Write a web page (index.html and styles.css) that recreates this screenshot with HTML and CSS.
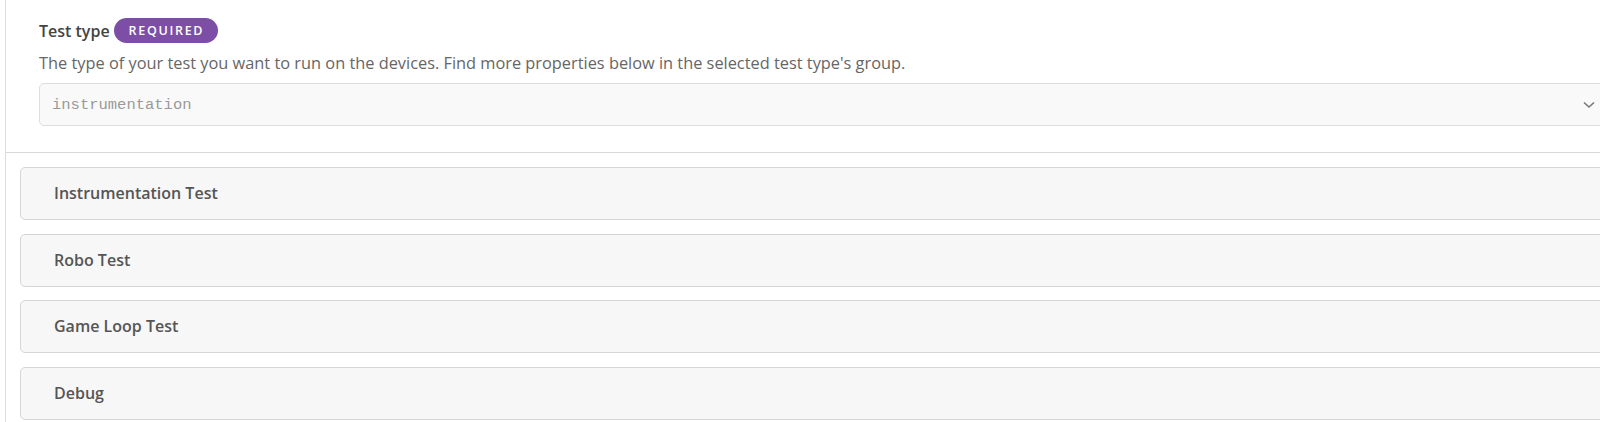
FILE: index.html
```html
<!DOCTYPE html>
<html lang="en">
<head>
    <meta charset="UTF-8">
    <meta name="viewport" content="width=device-width, initial-scale=1.0">
    <title>Test type</title>
    <link rel="stylesheet" href="styles.css">
</head>
<body>

    <div class="panel">
        <div class="field">
            <div class="label">
                <span>Test type</span>
                <span class="badge">Required</span>
            </div>
            <p class="help">The type of your test you want to run on the devices. Find more properties below in the selected test type's group.</p>
            <div class="select">
                <span>instrumentation</span>
                <svg class="chevron" width="12" height="8" viewBox="0 0 12 8">
                    <path d="M1 1.5 L6 6 L11 1.5" fill="none" stroke="#777" stroke-width="1.6"/>
                </svg>
            </div>
        </div>

        <div class="groups">
            <div class="group">Instrumentation Test</div>
            <div class="group">Robo Test</div>
            <div class="group">Game Loop Test</div>
            <div class="group">Debug</div>
        </div>
    </div>

</body>
</html>
```

FILE: styles.css
```css
body {
    margin: 0;
    font-family: "Open Sans", "Noto Sans", sans-serif;
    background: white;
    overflow: hidden;
}
.panel {
    margin-left: 5px;
    width: 1640px;
    border-left: 1px solid #dcdcdc;
    height: 422px;
}
.field {
    padding: 18px 0 26px 33px;
    border-bottom: 1px solid #d8d8d8;
}
.label {
    display: flex;
    align-items: center;
    gap: 4px;
    font-size: 16px;
    font-weight: 600;
    color: #444;
    height: 25px;
}
.badge {
    background: #7c4ea6;
    color: white;
    font-size: 12.5px;
    font-weight: 600;
    letter-spacing: 1.7px;
    text-transform: uppercase;
    padding: 0 14px 0 15px;
    height: 25px;
    line-height: 25px;
    border-radius: 13px;
}
.help {
    margin: 10px 0 10px;
    font-size: 16.35px;
    color: #666;
    line-height: 20px;
}
.select {
    display: flex;
    align-items: center;
    justify-content: space-between;
    height: 41px;
    padding: 0 14px 0 12px;
    width: 1543px;
    background: #f9f9f9;
    border: 1px solid #dedede;
    border-radius: 5px;
    font-family: "Liberation Mono", monospace;
    font-size: 15.5px;
    color: #999;
}
.groups {
    display: flex;
    flex-direction: column;
    gap: 13.7px;
    padding: 14px 0 0 14px;
}
.group {
    height: 51px;
    line-height: 51px;
    padding-left: 33px;
    background: #f7f7f7;
    border: 1px solid #d6d6d6;
    border-radius: 5px;
    font-size: 16px;
    font-weight: 600;
    color: #555;
}
```
